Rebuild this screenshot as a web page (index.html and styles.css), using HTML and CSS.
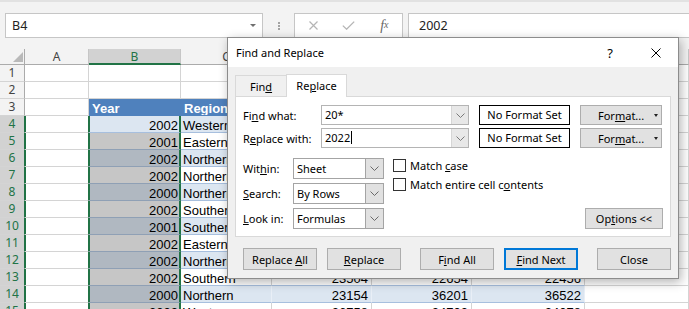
FILE: index.html
```html
<!doctype html>
<html lang="en">
<head>
	<meta charset="UTF-8">
	<title>Find and Replace</title>
	<link rel="stylesheet" href="styles.css">
</head>
<body>
	<div class="formula-bar">
		<div class="name-box"><span>B4</span><i class="drop"></i></div>
		<div class="grip"><i></i><i></i><i></i></div>
		<div class="fx-tools">
			<span class="slot"><svg width="9" height="9" viewBox="0 0 9 9"><path d="M0.5 0.5L8.5 8.5M8.5 0.5L0.5 8.5" stroke="#b5b5b5" stroke-width="1.2" fill="none"/></svg></span>
			<span class="slot"><svg width="13" height="9" viewBox="0 0 13 9"><path d="M0.8 4.6L4.6 8.2L12.2 0.6" stroke="#b5b5b5" stroke-width="1.3" fill="none"/></svg></span>
			<span class="slot fx"><i>f</i><small>x</small></span>
		</div>
		<div class="formula-input">2002</div>
	</div>

	<div class="sheet">
		<div class="corner"><svg width="10" height="10" viewBox="0 0 10 10"><path d="M10 0V10H0Z" fill="#b9b9b9"/></svg></div>
		<div class="ch">A</div><div class="ch sel">B</div><div class="ch">C</div><div class="ch">D</div><div class="ch">E</div><div class="ch">F</div><div class="ch">G</div>

		<div class="rh">1</div><div></div><div></div><div></div><div></div><div></div><div></div><div></div>
		<div class="rh">2</div><div></div><div></div><div></div><div></div><div></div><div></div><div></div>
		<div class="rh">3</div><div></div><div class="th">Year</div><div class="th">Region</div><div class="th">Qtr 1</div><div class="th">Qtr 2</div><div class="th">Qtr 3</div><div></div>

		<div class="rh sel">4</div><div class="a-sel"></div><div class="t band b-sel r">2002</div><div class="t band">Western</div><div class="t band r">24118</div><div class="t band r">27340</div><div class="t band r">25610</div><div></div>
		<div class="rh sel">5</div><div class="a-sel"></div><div class="t pick b-sel r">2001</div><div class="t">Eastern</div><div class="t r">21907</div><div class="t r">22845</div><div class="t r">23176</div><div></div>
		<div class="rh sel">6</div><div class="a-sel"></div><div class="t pick band b-sel r">2002</div><div class="t band">Northern</div><div class="t band r">30452</div><div class="t band r">31288</div><div class="t band r">29874</div><div></div>
		<div class="rh sel">7</div><div class="a-sel"></div><div class="t pick b-sel r">2002</div><div class="t">Northern</div><div class="t r">26311</div><div class="t r">24590</div><div class="t r">27032</div><div></div>
		<div class="rh sel">8</div><div class="a-sel"></div><div class="t pick band b-sel r">2000</div><div class="t band">Northern</div><div class="t band r">19876</div><div class="t band r">21453</div><div class="t band r">20117</div><div></div>
		<div class="rh sel">9</div><div class="a-sel"></div><div class="t pick b-sel r">2002</div><div class="t">Southern</div><div class="t r">28764</div><div class="t r">26019</div><div class="t r">27845</div><div></div>
		<div class="rh sel">10</div><div class="a-sel"></div><div class="t pick band b-sel r">2001</div><div class="t band">Southern</div><div class="t band r">22583</div><div class="t band r">23907</div><div class="t band r">24460</div><div></div>
		<div class="rh sel">11</div><div class="a-sel"></div><div class="t pick b-sel r">2002</div><div class="t">Eastern</div><div class="t r">25190</div><div class="t r">25734</div><div class="t r">26218</div><div></div>
		<div class="rh sel">12</div><div class="a-sel"></div><div class="t pick band b-sel r">2002</div><div class="t band">Northern</div><div class="t band r">31027</div><div class="t band r">29966</div><div class="t band r">30581</div><div></div>
		<div class="rh sel">13</div><div class="a-sel"></div><div class="t pick b-sel r">2002</div><div class="t">Southern</div><div class="t r">23504</div><div class="t r">22654</div><div class="t r">22456</div><div></div>
		<div class="rh sel">14</div><div class="a-sel"></div><div class="t pick band b-sel r">2000</div><div class="t band">Northern</div><div class="t band r">23154</div><div class="t band r">36201</div><div class="t band r">36522</div><div></div>
		<div class="rh sel">15</div><div class="a-sel"></div><div class="t pick b-sel r">2002</div><div class="t">Western</div><div class="t r">26758</div><div class="t r">24703</div><div class="t r">24078</div><div></div>
	</div>

	<div class="dialog">
		<div class="dlg-title">
			<span class="dlg-name">Find and Replace</span>
			<span class="dlg-help">?</span>
			<span class="dlg-close"><svg width="10" height="10" viewBox="0 0 10 10"><path d="M0.5 0.5L9.5 9.5M9.5 0.5L0.5 9.5" stroke="#000" stroke-width="1" fill="none"/></svg></span>
		</div>
		<div class="dlg-body">
			<div class="tabs">
				<span class="tab"><span>Fin<u>d</u></span></span>
				<span class="tab active"><span>Re<u>p</u>lace</span></span>
			</div>
			<div class="panel">
				<div class="field-row">
					<label>Fi<u>n</u>d what:</label>
					<div class="combo"><span class="val">20*</span><span class="arrow"><svg width="9" height="5" viewBox="0 0 9 5"><path d="M0.5 0.5L4.5 4.5L8.5 0.5" stroke="#7a7a7a" fill="none"/></svg></span></div>
					<div class="fmt-preview">No Format Set</div>
					<div class="btn fmt-btn"><span>For<u>m</u>at...</span><i class="tri"></i></div>
				</div>
				<div class="field-row">
					<label>R<u>e</u>place with:</label>
					<div class="combo"><span class="val">2022<i class="caret"></i></span><span class="arrow"><svg width="9" height="5" viewBox="0 0 9 5"><path d="M0.5 0.5L4.5 4.5L8.5 0.5" stroke="#7a7a7a" fill="none"/></svg></span></div>
					<div class="fmt-preview">No Format Set</div>
					<div class="btn fmt-btn"><span>For<u>m</u>at...</span><i class="tri"></i></div>
				</div>
				<div class="options">
					<div class="opt-fields">
						<div class="opt-row">
							<label>Wit<u>h</u>in:</label>
							<div class="select"><span class="val">Sheet</span><span class="arrow"><svg width="9" height="5" viewBox="0 0 9 5"><path d="M0.5 0.5L4.5 4.5L8.5 0.5" stroke="#6a6a6a" fill="none"/></svg></span></div>
						</div>
						<div class="opt-row">
							<label><u>S</u>earch:</label>
							<div class="select"><span class="val">By Rows</span><span class="arrow"><svg width="9" height="5" viewBox="0 0 9 5"><path d="M0.5 0.5L4.5 4.5L8.5 0.5" stroke="#6a6a6a" fill="none"/></svg></span></div>
						</div>
						<div class="opt-row">
							<label><u>L</u>ook in:</label>
							<div class="select"><span class="val">Formulas</span><span class="arrow"><svg width="9" height="5" viewBox="0 0 9 5"><path d="M0.5 0.5L4.5 4.5L8.5 0.5" stroke="#6a6a6a" fill="none"/></svg></span></div>
						</div>
					</div>
					<div class="checks">
						<div class="check"><i class="box"></i><span>Match <u>c</u>ase</span></div>
						<div class="check"><i class="box"></i><span>Match entire cell c<u>o</u>ntents</span></div>
					</div>
					<div class="btn options-btn"><span>Op<u>t</u>ions &lt;&lt;</span></div>
				</div>
			</div>
			<div class="actions">
				<div class="btn"><span>Replace <u>A</u>ll</span></div>
				<div class="btn"><span><u>R</u>eplace</span></div>
				<div class="btn wide-gap"><span>F<u>i</u>nd All</span></div>
				<div class="btn default"><span><u>F</u>ind Next</span></div>
				<div class="btn wide-gap"><span>Close</span></div>
			</div>
		</div>
	</div>
</body>
</html>
```

FILE: styles.css
```css
* { margin: 0; padding: 0; box-sizing: border-box; }
body { width: 689px; height: 309px; overflow: hidden; position: relative; background: #fff; font-family: "Noto Sans", sans-serif; }
u { text-decoration: underline; text-underline-offset: 1px; }
i { font-style: normal; }

/* formula bar */
.formula-bar { display: flex; height: 49px; padding: 11px 0 0 5px; background: #f3f3f3; border-top: 2px solid #e2e2e2; }
.name-box { display: flex; align-items: center; width: 258px; height: 25px; padding: 0 6px; background: #fff; border: 1px solid #c6c6c6; font-size: 12.5px; color: #222; }
.name-box .drop { margin-left: auto; border-top: 3px solid #6f6f6f; border-left: 3px solid transparent; border-right: 3px solid transparent; }
.grip { display: flex; flex-direction: column; align-items: center; justify-content: center; gap: 1px; width: 31px; height: 25px; }
.grip i { width: 2px; height: 2px; background: #a3a3a3; }
.fx-tools { display: flex; align-items: center; width: 109px; height: 25px; padding-left: 1px; background: #fff; border: 1px solid #c6c6c6; }
.fx-tools .slot { display: flex; justify-content: center; width: 36px; }
.fx { font: italic 14px "Liberation Serif", serif; color: #666; }
.fx i { font-style: italic; }
.fx small { font-size: 10px; position: relative; top: 1px; }
.formula-input { flex: 1; height: 25px; margin-left: 5px; padding-left: 10px; background: #fff; border: 1px solid #c6c6c6; border-right: none; font-size: 12.5px; line-height: 23px; color: #222; }

/* grid */
.sheet { display: grid; grid-template-columns: 25px 64px 92px 91px 100px 100px 113px 104px; grid-template-rows: 16px; grid-auto-rows: 17px; font: 13px "Liberation Sans", Arial, sans-serif; color: #000; }
.sheet > div { padding: 2px 2px 0; line-height: 15px; white-space: nowrap; overflow: hidden; border-right: 1px solid #d4d4d4; border-bottom: 1px solid #d4d4d4; }
.sheet .corner, .sheet .ch, .sheet .rh { padding: 0; background: #f3f3f3; font: 12px "Noto Sans", sans-serif; color: #444; text-align: center; line-height: 16px; }
.sheet .corner { display: flex; align-items: flex-end; justify-content: flex-end; padding: 0 1px 2px 0; border-right-color: #ababab; border-bottom-color: #ababab; }
.sheet .ch { line-height: 15px; border-right-color: #c6c6c6; border-bottom-color: #ababab; }
.sheet .ch.sel { background: #d2d2d2; color: #217346; border-bottom: 2px solid #217346; }
.sheet .rh { border-right-color: #ababab; }
.sheet .rh.sel { background: #d2d2d2; color: #217346; border-right-color: #217346; }
.sheet .a-sel { box-shadow: inset 1px 0 #217346; border-right-color: #217346; }

.sheet .th { background: #4f81bd; color: #fff; font-weight: bold; border-right-color: #4f81bd; border-bottom-color: #4f81bd; padding-left: 3px; }
.sheet .t { border-bottom-color: #a7bfde; }
.sheet .band { background: #dce6f1; border-right-color: #e9eff7; }
.sheet .pick { background: #c6c6c6; border-bottom-color: #8fa0b5; }
.sheet .pick.band { background: #b0b8c1; }
.sheet .b-sel { border-right: 2px solid #217346; box-shadow: inset 1px 0 #217346; padding-right: 1px; }
.sheet .r { text-align: right; padding-right: 3px; }
.sheet .b-sel.r { padding-right: 1px; }

/* dialog */
.dialog { position: absolute; left: 227px; top: 37px; width: 452px; height: 242px; background: #f0f0f0; border: 1px solid #8c8c8c; box-shadow: 2px 3px 10px rgba(0, 0, 0, 0.3); font: 11px "Noto Sans", sans-serif; color: #000; }
.dlg-title { display: flex; align-items: center; height: 29px; padding: 0 7px 0 8px; background: #fff; }
.dlg-name { flex: 1; font-size: 11px; }
.dlg-help { width: 20px; margin-right: 21px; text-align: center; font-size: 13px; }
.dlg-close { display: flex; justify-content: center; width: 30px; }
.dlg-body { padding: 7px 7px 0; }

.tabs { display: flex; align-items: flex-end; height: 22px; }
.tab { display: flex; align-items: center; justify-content: center; width: 52px; height: 21px; padding-top: 1px; border: 1px solid #d9d9d9; border-bottom: none; }
.tab.active { position: relative; width: 61px; height: 23px; margin: 0 0 -1px -1px; padding-top: 0; padding-bottom: 2px; background: #fff; }
.panel { padding: 8px 7px 7px; background: #fff; border: 1px solid #d9d9d9; }

.field-row { display: flex; align-items: center; height: 20px; }
.field-row + .field-row { margin-top: 3px; }
.field-row label { width: 78px; }
.combo, .select { display: flex; height: 20px; background: #fff; border: 1px solid #b4b4b4; }
.combo { width: 148px; }
.combo .val, .select .val { flex: 1; padding-left: 3px; line-height: 18px; white-space: nowrap; }
.combo .arrow, .select .arrow { display: flex; align-items: center; justify-content: center; width: 17px; background: #e8e8e8; border-left: 1px solid #d6d6d6; }
.caret { display: inline-block; width: 1px; height: 13px; margin-left: 1px; background: #000; vertical-align: -2px; }
.fmt-preview { width: 91px; height: 20px; margin-left: 10px; border: 1px solid #000; text-align: center; line-height: 18px; }

.btn { display: flex; align-items: center; justify-content: center; width: 74px; height: 22px; background: #e1e1e1; border: 1px solid #adadad; white-space: nowrap; }
.fmt-btn { width: 82px; height: 20px; margin-left: 10px; justify-content: flex-start; padding: 0 3px 0 17px; }
.fmt-btn .tri { margin-left: auto; border-top: 3px solid #222; border-left: 2.5px solid transparent; border-right: 2.5px solid transparent; }

.options { display: flex; margin-top: 10px; }
.opt-fields { display: flex; flex-direction: column; gap: 4px; }
.opt-row { display: flex; align-items: center; height: 21px; }
.opt-row label { width: 50px; }
.select { width: 91px; height: 21px; border-color: #a4a4a4; }
.select .val { line-height: 19px; }
.select .arrow { width: 18px; background: #e1e1e1; border-left-color: #a4a4a4; }
.checks { display: flex; flex-direction: column; gap: 6px; margin-left: 9px; padding-top: 1px; }
.check { display: flex; align-items: center; height: 13px; }
.check .box { width: 13px; height: 13px; margin-right: 4px; background: #fff; border: 1px solid #333; }
.options-btn { width: 78px; height: 21px; margin-left: auto; align-self: flex-end; }

.actions { display: flex; margin: 11px 0 0 8px; }
.actions .btn + .btn { margin-left: 10px; }
.actions .btn.wide-gap { margin-left: 19px; }
.actions .default { border: 2px solid #0078d7; }
```
